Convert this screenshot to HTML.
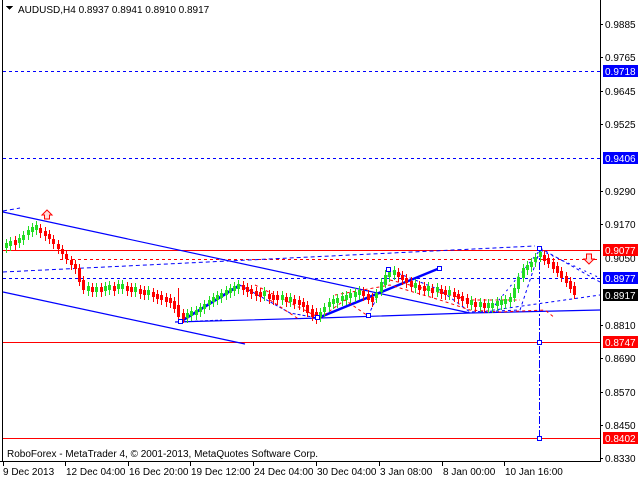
<!DOCTYPE html>
<html><head><meta charset="utf-8"><style>
html,body{margin:0;padding:0;background:#fff;width:640px;height:480px;overflow:hidden}
svg text{font-family:"Liberation Sans",sans-serif;font-size:10px}
</style></head><body>
<svg width="640" height="480" xmlns="http://www.w3.org/2000/svg" shape-rendering="crispEdges">
<rect width="640" height="480" fill="#fff"/>
<line x1="2.5" y1="0" x2="2.5" y2="462" stroke="#000"/>
<line x1="0" y1="461.5" x2="601" y2="461.5" stroke="#000"/>
<line x1="600.5" y1="0" x2="600.5" y2="462" stroke="#000"/>
<polygon points="6,6 13,6 9.5,10" fill="#000"/>
<text x="18" y="13" font-size="11">AUDUSD,H4  0.8937 0.8941 0.8910 0.8917</text>
<line x1="3" y1="71.5" x2="600" y2="71.5" stroke="#00f" stroke-dasharray="3,3"/>
<line x1="3" y1="158.5" x2="600" y2="158.5" stroke="#00f" stroke-dasharray="3,3"/>
<line x1="3" y1="250.5" x2="600" y2="250.5" stroke="#f00"/>
<line x1="60" y1="259.5" x2="600" y2="259.5" stroke="#f00" stroke-dasharray="3,3"/>
<line x1="3" y1="278.5" x2="600" y2="278.5" stroke="#00f" stroke-dasharray="3,3"/>
<line x1="3" y1="342.5" x2="600" y2="342.5" stroke="#f00"/>
<line x1="3" y1="438.5" x2="600" y2="438.5" stroke="#f00"/>
<g shape-rendering="auto" fill="none">
<line x1="3" y1="212" x2="470" y2="313" stroke="#00f" stroke-width="1.2"/>
<line x1="3" y1="292" x2="245" y2="344" stroke="#00f" stroke-width="1.2"/>
<line x1="3" y1="211" x2="20" y2="208" stroke="#00f" stroke-dasharray="4,3"/>
<polyline points="175,322 320,318 470,313 600,310" stroke="#00f" stroke-width="1.2"/>
<line x1="3" y1="272" x2="535" y2="246" stroke="#00f" stroke-dasharray="4,3"/>
<polyline points="180,322 240,285" stroke="#00f" stroke-width="2.5"/>
<polyline points="318,318 440,268" stroke="#00f" stroke-width="2.5"/>
<polyline points="240,285 290,313 318,318" stroke="#00f" stroke-dasharray="3,2"/>
<polyline points="180,322 222,320" stroke="#00f" stroke-dasharray="3,2"/>
<polyline points="368,316 390,270 440,290 470,312 520,310 540,250" stroke="#00f" stroke-dasharray="3,3"/>
<polyline points="540,248 600,282" stroke="#00f" stroke-dasharray="3,3"/>
<polyline points="480,312 600,295" stroke="#00f" stroke-dasharray="3,3"/>
<polyline points="495,305 540,250 600,278" stroke="#00f" stroke-dasharray="2,4"/>
<polyline points="255,285 320,318 345,300 368,316" stroke="#f00" stroke-dasharray="3,3"/>
<polyline points="270,300 300,320" stroke="#f00" stroke-dasharray="3,3"/>
<polyline points="335,295 390,285 440,300 470,310 500,312 545,310 555,318" stroke="#f00" stroke-dasharray="3,3"/>
<polyline points="390,280 470,300 520,300" stroke="#f00" stroke-dasharray="3,3"/>
<line x1="539.5" y1="248" x2="539.5" y2="438" stroke="#00f" stroke-dasharray="8,2,2,2"/>
<path d="M47,210 L52,215 L49.5,215 L49.5,219 L44.5,219 L44.5,215 L42,215 Z" stroke="#f00" fill="#fdd"/>
<path d="M589,264 L594,259 L591.5,259 L591.5,254 L586.5,254 L586.5,259 L584,259 Z" stroke="#f00" fill="#fdd"/>
</g>
<path fill="#22dd22" d="M5 243h3v5h-3zM9 241h3v5h-3zM18 238h3v5h-3zM22 235h3v5h-3zM27 230h3v5h-3zM31 227h3v5h-3zM35 225h3v5h-3zM87 286h3v5h-3zM95 287h3v5h-3zM104 286h3v5h-3zM108 285h3v5h-3zM117 284h3v5h-3zM121 284h3v5h-3zM134 287h3v5h-3zM147 290h3v5h-3zM186 313h3v5h-3zM190 311h3v5h-3zM195 310h3v5h-3zM199 307h3v5h-3zM203 304h3v5h-3zM208 300h3v5h-3zM212 297h3v5h-3zM216 295h3v5h-3zM220 293h3v5h-3zM225 290h3v5h-3zM229 288h3v5h-3zM233 286h3v5h-3zM237 284h3v5h-3zM263 291h3v5h-3zM281 295h3v5h-3zM289 297h3v5h-3zM319 312h3v5h-3zM323 307h3v5h-3zM328 302h3v5h-3zM332 299h3v5h-3zM336 298h3v5h-3zM341 296h3v5h-3zM345 295h3v5h-3zM349 293h3v5h-3zM354 292h3v5h-3zM358 290h3v5h-3zM375 293h3v5h-3zM380 282h3v10h-3zM384 275h3v10h-3zM388 272h3v5h-3zM393 270h3v5h-3zM414 283h3v5h-3zM427 286h3v5h-3zM436 287h3v5h-3zM448 290h3v5h-3zM470 300h3v5h-3zM479 302h3v5h-3zM487 303h3v5h-3zM491 303h3v5h-3zM496 301h3v5h-3zM500 300h3v5h-3zM504 299h3v5h-3zM509 297h3v5h-3zM513 288h3v10h-3zM517 277h3v12h-3zM522 268h3v10h-3zM526 265h3v5h-3zM530 262h3v5h-3zM534 257h3v5h-3zM539 252h3v5h-3z"/>
<path stroke="#22dd22" d="M6.5 239v14M10.5 237v14M19.5 234v14M23.5 231v14M28.5 226v14M32.5 223v14M36.5 221v14M88.5 282v14M96.5 283v14M105.5 282v14M109.5 281v14M118.5 280v14M122.5 280v14M135.5 283v14M148.5 286v14M187.5 309v14M191.5 307v14M196.5 306v14M200.5 303v14M204.5 300v14M209.5 296v14M213.5 293v14M217.5 291v14M221.5 289v14M226.5 286v14M230.5 284v14M234.5 282v14M238.5 280v14M264.5 287v14M282.5 291v14M290.5 293v14M320.5 308v14M324.5 303v14M329.5 298v14M333.5 295v14M337.5 294v14M342.5 292v14M346.5 291v14M350.5 289v14M355.5 288v14M359.5 286v14M376.5 289v14M381.5 278v18M385.5 270v18M389.5 268v14M394.5 266v14M415.5 279v14M428.5 282v14M437.5 283v14M449.5 286v14M471.5 296v14M480.5 298v14M488.5 299v14M492.5 299v14M497.5 297v14M501.5 296v14M505.5 295v14M510.5 293v14M514.5 284v18M518.5 273v20M523.5 264v18M527.5 261v14M531.5 258v14M535.5 253v14M540.5 248v14"/>
<path fill="#ff0000" d="M14 240h3v5h-3zM39 228h3v5h-3zM44 231h3v5h-3zM48 234h3v5h-3zM52 239h3v5h-3zM57 244h3v5h-3zM61 249h3v5h-3zM65 254h3v5h-3zM70 260h3v5h-3zM74 264h3v5h-3zM78 268h3v14h-3zM82 280h3v10h-3zM91 287h3v5h-3zM100 287h3v5h-3zM113 286h3v5h-3zM126 286h3v5h-3zM130 287h3v5h-3zM139 289h3v5h-3zM143 290h3v5h-3zM152 292h3v5h-3zM156 294h3v5h-3zM160 295h3v5h-3zM165 297h3v5h-3zM169 298h3v5h-3zM173 301h3v8h-3zM177 305h3v12h-3zM182 313h3v6h-3zM242 285h3v5h-3zM246 287h3v5h-3zM250 289h3v5h-3zM255 291h3v5h-3zM259 292h3v5h-3zM268 294h3v5h-3zM272 295h3v5h-3zM276 295h3v5h-3zM285 297h3v5h-3zM293 299h3v5h-3zM298 300h3v5h-3zM302 302h3v5h-3zM306 305h3v8h-3zM311 309h3v8h-3zM315 312h3v8h-3zM362 291h3v5h-3zM367 294h3v6h-3zM371 297h3v5h-3zM397 272h3v5h-3zM401 275h3v5h-3zM405 278h3v5h-3zM410 281h3v6h-3zM418 285h3v5h-3zM423 286h3v5h-3zM431 288h3v5h-3zM440 289h3v5h-3zM444 290h3v5h-3zM453 292h3v5h-3zM457 294h3v5h-3zM461 296h3v5h-3zM466 298h3v6h-3zM474 302h3v5h-3zM483 303h3v5h-3zM543 255h3v6h-3zM547 258h3v6h-3zM552 262h3v7h-3zM556 266h3v7h-3zM560 271h3v7h-3zM565 276h3v7h-3zM569 281h3v8h-3zM573 286h3v9h-3z"/>
<path stroke="#ff0000" d="M15.5 236v14M40.5 224v14M45.5 227v14M49.5 230v14M53.5 235v14M58.5 240v14M62.5 245v14M66.5 250v14M71.5 256v14M75.5 260v14M79.5 264v22M83.5 276v18M92.5 283v14M101.5 283v14M114.5 282v14M127.5 282v14M131.5 283v14M140.5 285v14M144.5 286v14M153.5 288v14M157.5 290v14M161.5 291v14M166.5 293v14M170.5 294v14M174.5 297v16M178.5 288v34M183.5 309v14M243.5 281v14M247.5 283v14M251.5 285v14M256.5 287v14M260.5 288v14M269.5 290v14M273.5 291v14M277.5 291v14M286.5 293v14M294.5 295v14M299.5 296v14M303.5 298v14M307.5 301v16M312.5 305v16M316.5 308v16M363.5 287v14M368.5 290v14M372.5 293v14M398.5 268v14M402.5 271v14M406.5 274v14M411.5 277v14M419.5 281v14M424.5 282v14M432.5 284v14M441.5 285v14M445.5 286v14M454.5 288v14M458.5 290v14M462.5 292v14M467.5 294v14M475.5 298v14M484.5 299v14M544.5 251v14M548.5 254v14M553.5 258v15M557.5 262v15M561.5 267v15M566.5 272v15M570.5 277v16M574.5 282v17"/>
<g fill="#fff" stroke="#00f">
<rect x="537.5" y="246.5" width="4" height="4"/><rect x="537.5" y="340.5" width="4" height="4"/><rect x="537.5" y="436.5" width="4" height="4"/>
<rect x="437.5" y="266.5" width="4" height="4"/><rect x="386.5" y="267.5" width="4" height="4"/>
<rect x="366.5" y="313.5" width="4" height="4"/><rect x="315.5" y="315.5" width="4" height="4"/>
<rect x="178.5" y="319.5" width="4" height="4"/>
</g>
<g font-size="10">
<g stroke="#000"><line x1="600" y1="24.5" x2="603" y2="24.5"/><line x1="600" y1="57.5" x2="603" y2="57.5"/><line x1="600" y1="91.5" x2="603" y2="91.5"/><line x1="600" y1="124.5" x2="603" y2="124.5"/><line x1="600" y1="191.5" x2="603" y2="191.5"/><line x1="600" y1="224.5" x2="603" y2="224.5"/><line x1="600" y1="325.5" x2="603" y2="325.5"/><line x1="600" y1="358.5" x2="603" y2="358.5"/><line x1="600" y1="392.5" x2="603" y2="392.5"/><line x1="600" y1="425.5" x2="603" y2="425.5"/><line x1="600" y1="458.5" x2="603" y2="458.5"/></g>
<text x="605" y="28">0.9885</text><text x="605" y="61">0.9765</text><text x="605" y="95">0.9645</text><text x="605" y="128">0.9525</text><text x="605" y="195">0.9290</text><text x="605" y="228">0.9170</text><text x="605" y="262">0.9050</text><text x="605" y="329">0.8810</text><text x="605" y="362">0.8690</text><text x="605" y="396">0.8570</text><text x="605" y="429">0.8450</text><text x="605" y="462">0.8330</text>
<rect x="603" y="65" width="35" height="12" fill="#00f"/><text x="605" y="75" fill="#fff">0.9718</text>
<rect x="603" y="152" width="35" height="12" fill="#00f"/><text x="605" y="162" fill="#fff">0.9406</text>
<rect x="603" y="244" width="35" height="12" fill="#f00"/><text x="605" y="254" fill="#fff">0.9077</text>
<rect x="603" y="272" width="35" height="12" fill="#00f"/><text x="605" y="282" fill="#fff">0.8977</text>
<rect x="603" y="289" width="35" height="12" fill="#000"/><text x="605" y="299" fill="#fff">0.8917</text>
<rect x="603" y="336" width="35" height="12" fill="#f00"/><text x="605" y="346" fill="#fff">0.8747</text>
<rect x="603" y="432" width="35" height="12" fill="#f00"/><text x="605" y="442" fill="#fff">0.8402</text>
</g>
<text x="7" y="457" font-size="10">RoboForex - MetaTrader 4, © 2001-2013, MetaQuotes Software Corp.</text>
<g stroke="#000"><line x1="3.5" y1="462" x2="3.5" y2="466"/><line x1="65.5" y1="462" x2="65.5" y2="466"/><line x1="128.5" y1="462" x2="128.5" y2="466"/><line x1="190.5" y1="462" x2="190.5" y2="466"/><line x1="253.5" y1="462" x2="253.5" y2="466"/><line x1="316.5" y1="462" x2="316.5" y2="466"/><line x1="379.5" y1="462" x2="379.5" y2="466"/><line x1="442.5" y1="462" x2="442.5" y2="466"/><line x1="504.5" y1="462" x2="504.5" y2="466"/></g>
<g font-size="10"><text x="3" y="475">9 Dec 2013</text><text x="66" y="475">12 Dec 04:00</text><text x="129" y="475">16 Dec 20:00</text><text x="191" y="475">19 Dec 12:00</text><text x="254" y="475">24 Dec 04:00</text><text x="317" y="475">30 Dec 04:00</text><text x="380" y="475">3 Jan 08:00</text><text x="443" y="475">8 Jan 00:00</text><text x="505" y="475">10 Jan 16:00</text></g>
</svg>
</body></html>
